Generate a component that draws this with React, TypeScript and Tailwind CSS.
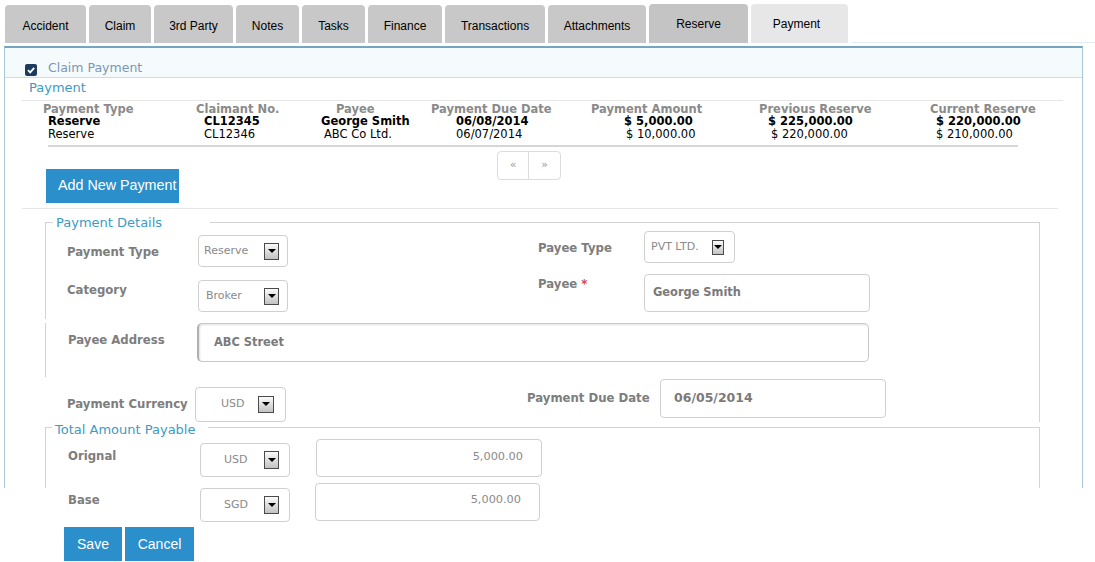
import React from "react";

function Arrow({ cls }: { cls: string }) {
  return (
    <div
      className={
        "flex items-center justify-center border border-[#4a4a4a] bg-linear-to-b from-[#fbfbfb] to-[#c2c2c2] " +
        cls
      }
    >
      <div className="w-0 h-0 border-x-[4px] border-x-transparent border-t-[4px] border-t-black -mt-[1px]" />
    </div>
  );
}

function Select({
  value,
  box,
  text,
  arrow,
}: {
  value: string;
  box: string;
  text: string;
  arrow: string;
}) {
  return (
    <div
      className={
        "flex items-center rounded-[4px] border border-[#d0d0d0] bg-white text-[11px] text-[#8a8a8a] " +
        box
      }
    >
      <span className={text}>{value}</span>
      <Arrow cls={"ml-auto " + arrow} />
    </div>
  );
}

const tabs = [
  { label: "Accident", cls: "w-[81px] h-[38px] bg-[#c8c8c8] pt-[4px]" },
  { label: "Claim", cls: "w-[62px] h-[38px] bg-[#c8c8c8] pt-[4px]" },
  { label: "3rd Party", cls: "w-[79px] h-[38px] bg-[#c8c8c8] pt-[4px]" },
  { label: "Notes", cls: "w-[63px] h-[38px] bg-[#c8c8c8] pt-[4px]" },
  { label: "Tasks", cls: "w-[63px] h-[38px] bg-[#c8c8c8] pt-[4px]" },
  { label: "Finance", cls: "w-[74px] h-[38px] bg-[#c8c8c8] pt-[4px]" },
  { label: "Transactions", cls: "w-[100px] h-[38px] bg-[#c8c8c8] pt-[4px]" },
  { label: "Attachments", cls: "w-[98px] h-[38px] bg-[#c8c8c8] pt-[4px]" },
  { label: "Reserve", cls: "w-[99px] h-[39px] bg-[#c4c4c4]" },
  { label: "Payment", cls: "w-[97px] h-[39px] bg-[#e7e7e7] pr-[6px]" },
];

const cols = [
  { w: "w-[153px]", h: "Payment Type", hx: "pl-0", r1: "Reserve", r1x: "pl-[5px]", r2: "Reserve", r2x: "pl-[5px]" },
  { w: "w-[125px]", h: "Claimant No.", hx: "pl-0", r1: "CL12345", r1x: "pl-[8px]", r2: "CL12346", r2x: "pl-[8px]" },
  { w: "w-[110px]", h: "Payee", hx: "pl-[15px]", r1: "George Smith", r1x: "pl-0", r2: "ABC Co Ltd.", r2x: "pl-[3px]" },
  { w: "w-[160px]", h: "Payment Due Date", hx: "pl-0", r1: "06/08/2014", r1x: "pl-[25px]", r2: "06/07/2014", r2x: "pl-[25px]" },
  { w: "w-[168px]", h: "Payment Amount", hx: "pl-0", r1: "$ 5,000.00", r1x: "pl-[33px]", r2: "$ 10,000.00", r2x: "pl-[35px]" },
  { w: "w-[171px]", h: "Previous Reserve", hx: "pl-0", r1: "$ 225,000.00", r1x: "pl-[9px]", r2: "$ 220,000.00", r2x: "pl-[12px]" },
  { w: "w-[120px]", h: "Current Reserve", hx: "pl-0", r1: "$ 220,000.00", r1x: "pl-[6px]", r2: "$ 210,000.00", r2x: "pl-[6px]" },
];

const label = "text-[11.7px] font-bold text-[#7d7d7d] leading-[13px] whitespace-nowrap";
const input =
  "flex items-center rounded-[4px] border border-[#d0d0d0] bg-white font-bold text-[#7a7a7a]";

export default function App() {
  return (
    <div className="relative w-[1095px] h-[562px] overflow-hidden bg-white font-['DejaVu_Sans',Verdana,sans-serif]">
      {/* Tabs */}
      <div className="flex items-end h-[46px] pl-[5px] gap-[3px]">
        {tabs.map((t) => (
          <div
            key={t.label}
            className={
              "mb-[3px] rounded-t-[4px] flex items-center justify-center text-[12px] text-black font-['Liberation_Sans',Arial,sans-serif] " +
              t.cls
            }
          >
            {t.label}
          </div>
        ))}
        <div className="flex-1 h-[1px] mb-[3px] bg-[#e4eef2]" />
      </div>

      {/* Panel */}
      <div className="ml-[4px] w-[1079px] h-[442px] border-t-2 border-t-[#74a6bd] border-x border-x-[#a9c8d6]">
        <div className="h-[30px] bg-[#f5fafc] border-b border-b-[#c3e0ea] flex items-center pl-[20px] pt-[8px]">
          <div className="w-[12px] h-[12px] rounded-[2px] bg-[#1e3b5e] flex items-center justify-center translate-y-[3px]">
            <svg width="10" height="10" viewBox="0 0 10 10">
              <polyline points="2,5.2 4.2,7.4 8.2,2.8" fill="none" stroke="white" strokeWidth="1.8" />
            </svg>
          </div>
          <span className="ml-[11px] text-[12.5px] leading-[16px] text-[#7d97b1] translate-y-[1px]">Claim Payment</span>
        </div>

        <div className="mt-[2px] pl-[24px] text-[13px] leading-[16px] text-[#3b9bc5]">Payment</div>
        <div className="mt-[4px] ml-[17px] w-[1041px] border-t border-t-[#e6e6e6]" />

        {/* Table */}
        <div className="mt-[2px] ml-[38px] flex">
          {cols.map((c) => (
            <div key={c.h} className={"shrink-0 flex flex-col " + c.w}>
              <div className={"h-[12px] leading-[12px] text-[11.5px] font-bold text-[#8a8a8a] whitespace-nowrap " + c.hx}>
                {c.h}
              </div>
              <div className={"h-[13px] leading-[13px] text-[11.5px] font-bold text-black whitespace-nowrap " + c.r1x}>
                {c.r1}
              </div>
              <div className={"h-[13px] leading-[13px] text-[11.5px] text-black whitespace-nowrap " + c.r2x}>
                {c.r2}
              </div>
            </div>
          ))}
        </div>
        <div className="mt-[4px] ml-[43px] w-[970px] h-[2px] bg-[#d6d6d6]" />

        {/* Button + pager */}
        <div className="mt-[4px] flex items-start">
          <div className="ml-[41px] mt-[18px] w-[133px] h-[34px] pl-[12px] bg-[#2a8fcb] text-white text-[14.3px] flex items-center font-['Liberation_Sans',Arial,sans-serif]">
            Add New Payment
          </div>
          <div className="ml-[318px] flex h-[29px] border border-[#dcdcdc] rounded-[4px] text-[11px] text-[#9a9a9a]">
            <div className="w-[31px] flex items-center justify-center border-r border-r-[#dcdcdc]">«</div>
            <div className="w-[31px] flex items-center justify-center">»</div>
          </div>
        </div>
        <div className="mt-[5px] ml-[17px] w-[1036px] border-t border-t-[#e8e8e8]" />

        {/* Payment Details */}
        <fieldset className="mt-[5px] ml-[40px] w-[995px] min-w-0 border-t border-r border-[#d3d3d3]">
          <legend className="ml-[8px] pl-[3px] pr-[48px] text-[13px] leading-[16px] text-[#3b9bc5]">
            <span className="inline-block translate-y-[1px]">Payment Details</span>
          </legend>

          <div className="-mt-[8px] h-[97px] border-l border-l-[#d3d3d3] flex">
            <div className="w-[492px] pl-[21px] flex flex-col">
              <div className="mt-[13px] h-[32px] flex items-center">
                <div className={"w-[131px] translate-y-[1px] " + label}>Payment Type</div>
                <Select value="Reserve" box="w-[90px] h-[32px]" text="pl-[5px]" arrow="mr-[8px] w-[15px] h-[17px]" />
              </div>
              <div className="mt-[13px] h-[32px] flex items-start">
                <div className={"w-[131px] pt-[4px] " + label}>Category</div>
                <Select value="Broker" box="w-[90px] h-[32px]" text="pl-[7px]" arrow="mr-[8px] w-[15px] h-[17px]" />
              </div>
            </div>
            <div className="flex flex-col">
              <div className="mt-[9px] h-[32px] flex items-center">
                <div className={"w-[106px] translate-y-[1px] " + label}>Payee Type</div>
                <Select value="PVT LTD." box="w-[91px] h-[32px]" text="pl-[6px]" arrow="mr-[10px] w-[12px] h-[15px]" />
              </div>
              <div className="mt-[11px] flex items-start">
                <div className={"w-[106px] pt-[4px] " + label}>
                  Payee <span className="text-[#d24a4a]">*</span>
                </div>
                <div className={"w-[226px] h-[38px] pl-[8px] text-[11.4px] " + input}>George Smith</div>
              </div>
            </div>
          </div>

          <div className="mt-[4px] h-[54px] border-l border-l-[#d3d3d3] flex items-start pl-[22px]">
            <div className={"w-[129px] pt-[11px] " + label}>Payee Address</div>
            <div className="w-[672px] h-[39px] pl-[15px] flex items-center rounded-[5px] border border-[#c8c8c8] border-l-[2px] border-l-[#b0b0b0] shadow-[inset_1px_1px_2px_rgba(0,0,0,0.12)] text-[11.4px] font-bold text-[#7a7a7a]">
              ABC Street
            </div>
          </div>

          <div className="h-[45px] flex items-start">
            <div className="w-[482px] pl-[22px] mt-[10px] h-[35px] flex items-center">
              <div className={"w-[128px] " + label}>Payment Currency</div>
              <Select value="USD" box="w-[91px] h-[35px]" text="pl-[25px]" arrow="mr-[11px] w-[16px] h-[17px]" />
            </div>
            <div className="mt-[2px] h-[39px] flex items-center">
              <div className={"w-[133px] " + label}>Payment Due Date</div>
              <div className={"w-[226px] h-[39px] pl-[13px] text-[12.5px] " + input}>06/05/2014</div>
            </div>
          </div>
        </fieldset>

        {/* Total Amount Payable */}
        <fieldset className="-mt-[3px] ml-[40px] w-[995px] h-[69px] min-w-0 border-t border-x border-[#d3d3d3]">
          <legend className="ml-[6px] pl-[3px] pr-[13px] text-[13px] leading-[16px] text-[#3b9bc5]">
            <span className="inline-block translate-y-[3px]">Total Amount Payable</span>
          </legend>
          <div className="mt-[4px] flex items-start pl-[22px]">
            <div className={"w-[132px] mt-[11px] " + label}>Orignal</div>
            <Select value="USD" box="mt-[4px] w-[90px] h-[34px]" text="pl-[23px]" arrow="mr-[10px] w-[15px] h-[18px]" />
            <div className="ml-[26px] w-[226px] h-[38px] pr-[18px] flex items-center justify-end rounded-[4px] border border-[#d0d0d0] bg-white text-[11.3px] text-[#8a8a8a]">
              <span className="-translate-y-[1px]">5,000.00</span>
            </div>
          </div>
          <div className="mt-[6px] flex items-start pl-[22px]">
            <div className={"w-[132px] mt-[11px] " + label}>Base</div>
            <Select value="SGD" box="mt-[5px] w-[90px] h-[34px]" text="pl-[23px]" arrow="mr-[10px] w-[15px] h-[18px]" />
            <div className="ml-[25px] w-[225px] h-[38px] pr-[18px] flex items-center justify-end rounded-[4px] border border-[#d0d0d0] bg-white text-[11.3px] text-[#8a8a8a]">
              <span className="-translate-y-[2px]">5,000.00</span>
            </div>
          </div>
          <div className="mt-[5px] ml-[18px] flex gap-[3px] font-['Liberation_Sans',Arial,sans-serif] text-[14px] text-white">
            <div className="w-[58px] h-[34px] bg-[#2a8fcb] flex items-center justify-center">Save</div>
            <div className="w-[69px] h-[34px] bg-[#2a8fcb] flex items-center justify-center">Cancel</div>
          </div>
        </fieldset>
      </div>
    </div>
  );
}
